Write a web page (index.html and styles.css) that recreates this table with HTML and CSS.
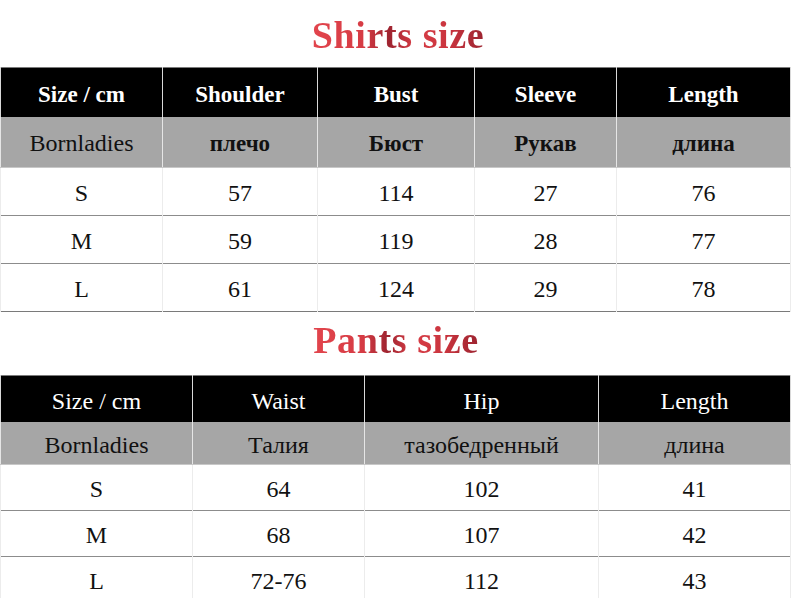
FILE: index.html
```html
<!DOCTYPE html>
<html>
<head>
<meta charset="utf-8">
<link rel="stylesheet" href="styles.css">
</head>
<body>
<div class="page">
  <h1 class="title title-shirts"><span>Shirts size</span></h1>
  <table class="chart shirts">
    <colgroup>
      <col class="c-s1"><col class="c-s2"><col class="c-s3"><col class="c-s4"><col class="c-s5">
    </colgroup>
    <tr class="head">
      <th>Size / cm</th><th>Shoulder</th><th>Bust</th><th>Sleeve</th><th>Length</th>
    </tr>
    <tr class="sub">
      <td class="brand">Bornladies</td><td>плечо</td><td>Бюст</td><td>Рукав</td><td>длина</td>
    </tr>
    <tr class="data"><td>S</td><td>57</td><td>114</td><td>27</td><td>76</td></tr>
    <tr class="data"><td>M</td><td>59</td><td>119</td><td>28</td><td>77</td></tr>
    <tr class="data"><td>L</td><td>61</td><td>124</td><td>29</td><td>78</td></tr>
  </table>

  <h1 class="title title-pants"><span>Pants size</span></h1>
  <table class="chart pants">
    <colgroup>
      <col class="c-p1"><col class="c-p2"><col class="c-p3"><col class="c-p4">
    </colgroup>
    <tr class="head">
      <th>Size / cm</th><th>Waist</th><th>Hip</th><th>Length</th>
    </tr>
    <tr class="sub">
      <td>Bornladies</td><td>Талия</td><td>тазобедренный</td><td>длина</td>
    </tr>
    <tr class="data"><td>S</td><td>64</td><td>102</td><td>41</td></tr>
    <tr class="data"><td>M</td><td>68</td><td>107</td><td>42</td></tr>
    <tr class="data"><td>L</td><td>72-76</td><td>112</td><td>43</td></tr>
  </table>
</div>
</body>
</html>
```

FILE: styles.css
```css
html, body {
  margin: 0;
  padding: 0;
  background: #ffffff;
}

body {
  font-family: "Liberation Serif", "Times New Roman", serif;
  color: #111111;
  overflow: hidden;
}

.page {
  width: 792px;
  height: 598px;
  overflow: hidden;
}

.title {
  margin: 0;
  text-align: center;
  font-family: "Liberation Serif", "Times New Roman", serif;
  font-weight: bold;
  font-size: 38px;
  letter-spacing: 0.6px;
  line-height: 1;
}

.title span {
  display: inline-block;
  background: linear-gradient(90deg, #e2454d 0%, #d63b44 30%, #9e2430 45%, #d83d46 60%, #c9343e 80%, #9c2430 100%);
  -webkit-background-clip: text;
  background-clip: text;
  color: transparent;
}

.title-shirts {
  padding: 16px 0 0 4px;
  box-sizing: border-box;
  height: 67px;
}

.title-pants {
  padding: 9px 0 0 0;
  height: 63px;
  box-sizing: border-box;
}

.chart {
  border-collapse: collapse;
  table-layout: fixed;
  border: 1px solid #7a7a7a;
}

.shirts { width: 790px; }
.pants { width: 790px; }

.c-s1 { width: 162px; }
.c-s2 { width: 155px; }
.c-s3 { width: 157px; }
.c-s4 { width: 142px; }
.c-s5 { width: 174px; }

.c-p1 { width: 192px; }
.c-p2 { width: 172px; }
.c-p3 { width: 234px; }
.c-p4 { width: 192px; }

.chart th,
.chart td {
  padding: 0;
  text-align: center;
  vertical-align: middle;
  white-space: nowrap;
  line-height: 1;
}

.head th {
  background: #000000;
  color: #ffffff;
  border-left: 1px solid #d9d9d9;
  border-right: 1px solid #d9d9d9;
}

.sub td {
  background: #a6a6a6;
  color: #111111;
  border-left: 1px solid #e6e6e6;
  border-right: 1px solid #e6e6e6;
  border-bottom: 1px solid #c8c8c8;
}

.data td {
  background: #ffffff;
  border-left: 1px solid #ececec;
  border-right: 1px solid #ececec;
  border-top: 1px solid #8c8c8c;
  font-size: 24px;
}

.shirts .head th {
  height: 46px;
  font-weight: bold;
  font-size: 23px;
  padding-top: 3px;
}

.shirts .sub td {
  height: 48px;
  font-weight: bold;
  font-size: 23px;
  padding-top: 2px;
}

.shirts .sub td.brand {
  font-weight: normal;
  font-size: 24px;
}

.shirts .data td {
  height: 45px;
  padding-top: 2px;
}

.pants .head th {
  height: 42px;
  font-weight: normal;
  font-size: 24px;
  padding-top: 4px;
}

.pants .sub td {
  height: 39px;
  font-size: 24px;
  padding-top: 3px;
}

.pants .data td {
  height: 43px;
  padding-top: 2px;
}
```
